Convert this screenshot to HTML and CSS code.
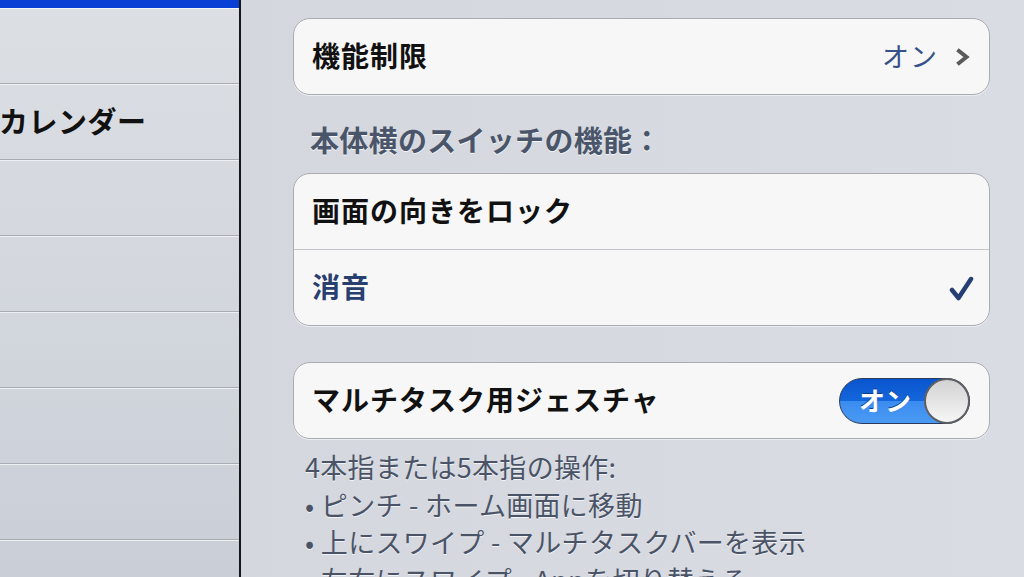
FILE: index.html
```html
<!DOCTYPE html>
<html lang="ja">
<head>
    <meta charset="UTF-8">
    <meta name="viewport" content="width=device-width, initial-scale=1.0">
    <title>一般</title>
    <link rel="stylesheet" href="styles.css">
</head>
<body>
    <div class="sidebar">
        <div class="sidebar-top"></div>
        <div class="side-row"></div>
        <div class="side-row"><span class="side-label">カレンダー</span></div>
        <div class="side-row"></div>
        <div class="side-row"></div>
        <div class="side-row"></div>
        <div class="side-row"></div>
        <div class="side-row"></div>
    </div>
    <div class="detail">
        <div class="group">
            <div class="cell">
                <span class="cell-title">機能制限</span>
                <span class="cell-value">オン
                    <svg class="chevron" width="14" height="18" viewBox="0 0 14 18">
                        <polyline points="3,3 10.5,9 3,15" fill="none" stroke="#5b5b5b" stroke-width="4" stroke-linecap="square"/>
                    </svg>
                </span>
            </div>
        </div>

        <div class="group-header">本体横のスイッチの機能：</div>
        <div class="group">
            <div class="cell">
                <span class="cell-title">画面の向きをロック</span>
            </div>
            <div class="cell">
                <span class="cell-title selected">消音</span>
                <svg class="check" width="26" height="28" viewBox="0 0 26 28">
                    <path d="M3 15 L9.5 23 L22 4" fill="none" stroke="#253f72" stroke-width="4.5" stroke-linecap="round" stroke-linejoin="round"/>
                </svg>
            </div>
        </div>

        <div class="group group-spaced">
            <div class="cell">
                <span class="cell-title">マルチタスク用ジェスチャ</span>
                <div class="toggle">
                    <span class="toggle-text">オン</span>
                    <span class="toggle-knob"></span>
                </div>
            </div>
        </div>

        <div class="footer-text">
            <p>4本指または5本指の操作:</p>
            <p>• ピンチ - ホーム画面に移動</p>
            <p>• 上にスワイプ - マルチタスクバーを表示</p>
            <p>• 左右にスワイプ - Appを切り替える</p>
        </div>
    </div>
</body>
</html>
```

FILE: styles.css
```css
body {
    margin: 0;
    padding: 0;
    display: flex;
    height: 577px;
    overflow: hidden;
    font-family: "Noto Sans CJK JP", "Noto Sans", sans-serif;
    background: #d6d9e0;
}
.sidebar {
    width: 239px;
    flex-shrink: 0;
    border-right: 2px solid #161616;
    background: linear-gradient(#dcdfe4, #cacfd7);
    overflow: hidden;
}
.sidebar-top {
    height: 8px;
    background: #0a3fd6;
    border-bottom: 1px solid #f4f5f7;
}
.side-row {
    height: 74px;
    border-bottom: 1px solid #a9acb3;
    box-shadow: 0 1px 0 #eef0f3;
    margin-bottom: 1px;
    display: flex;
    align-items: center;
    padding-bottom: 0;
}
.side-label {
    font-size: 29px;
    font-weight: bold;
    color: #111;
    margin-left: -1px;
    margin-bottom: 4px;
    letter-spacing: 0.5px;
}
.detail {
    flex: 1;
    padding: 18px 34px 0 52px;
    background: linear-gradient(90deg, #d4d7de, #d9dce3);
}
.group {
    background: #f7f7f7;
    border: 1px solid #a8abb1;
    border-radius: 17px;
    box-shadow: 0 1px 0 #eceef2;
    overflow: hidden;
}
.group-spaced {
    margin-top: 36px;
}
.cell {
    height: 75px;
    box-sizing: border-box;
    display: flex;
    align-items: center;
    justify-content: space-between;
    padding: 0 18px 3px;
}
.cell + .cell {
    border-top: 1px solid #c3c5ca;
    height: 76px;
}
.cell-title {
    font-size: 28px;
    font-weight: bold;
    color: #111;
    letter-spacing: 1px;
}
.cell-title.selected {
    color: #283f6f;
}
.cell-value {
    display: flex;
    align-items: center;
    gap: 18px;
    font-size: 27px;
    letter-spacing: 1px;
    color: #35528a;
    margin-right: 1px;
}
.chevron {
    margin-top: 3px;
}
.check {
    margin-right: -4px;
    margin-top: 6px;
}
.group-header {
    margin: 26px 0 16px;
    padding-left: 17px;
    line-height: 36px;
    font-size: 29px;
    font-weight: bold;
    letter-spacing: 0.3px;
    color: #4b5569;
    text-shadow: 0 1px 0 #f4f5f7;
}
.toggle {
    position: relative;
    width: 131px;
    height: 46px;
    box-sizing: border-box;
    border: 1px solid #2a3a5c;
    border-radius: 23px;
    background: linear-gradient(#0a55cf 0%, #1466dc 50%, #3b8cf0 51%, #4a9af3 100%);
    display: flex;
    align-items: center;
    margin-right: 1px;
    margin-top: 3px;
}
.toggle-text {
    margin-left: 19px;
    margin-bottom: 2px;
    font-size: 26px;
    font-weight: bold;
    color: #fff;
    text-shadow: 0 -1px 0 #0c3a8a;
}
.toggle-knob {
    position: absolute;
    right: -1px;
    top: -1px;
    width: 46px;
    height: 46px;
    box-sizing: border-box;
    border-radius: 50%;
    border: 2px solid #5d5f63;
    background: linear-gradient(#d2d2d2, #f6f6f6);
}
.footer-text {
    margin-top: 9px;
    padding-left: 12px;
    font-size: 27px;
    letter-spacing: 0.3px;
    color: #4b5467;
    text-shadow: 0 1px 0 #f2f3f6;
}
.footer-text p {
    margin: 0;
    line-height: 37.5px;
    white-space: nowrap;
}
```
